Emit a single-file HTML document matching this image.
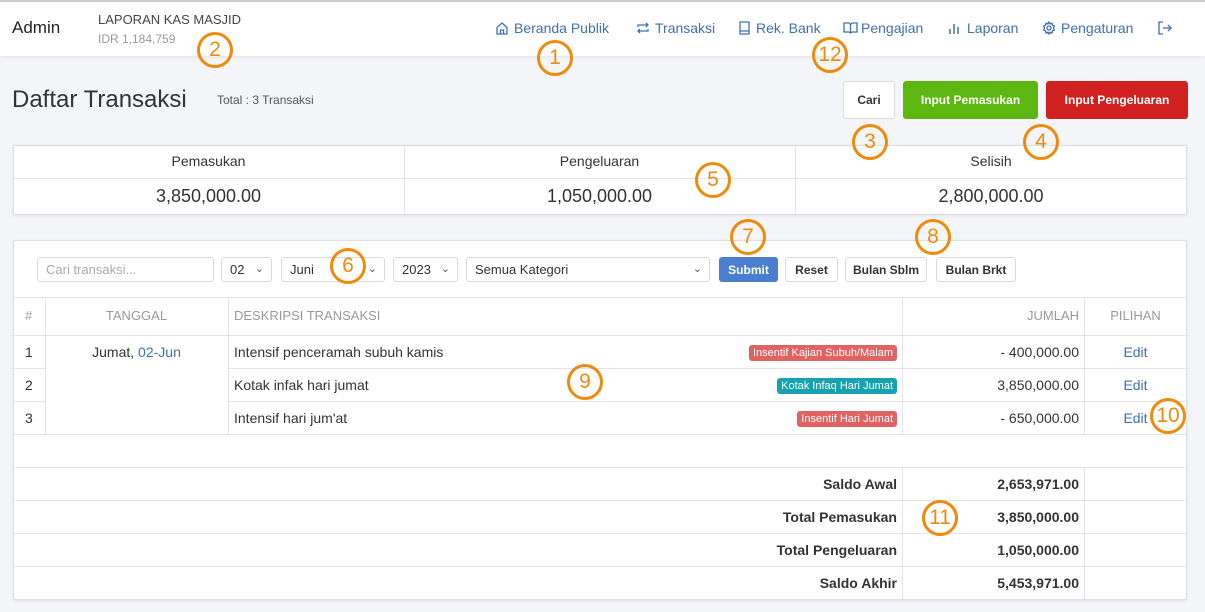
<!DOCTYPE html>
<html><head><meta charset="utf-8"><style>
*{box-sizing:border-box;margin:0;padding:0}
body{width:1205px;height:612px;background:#f3f5f8;font-family:"Liberation Sans",sans-serif;color:#333;position:relative;overflow:hidden;font-size:14px}
.a{position:absolute;white-space:nowrap}
.nav{position:absolute;left:0;top:0;width:1205px;height:56px;background:#fff;border-top:2px solid #ccc;box-shadow:0 1px 4px rgba(0,0,0,.08)}
.nl{position:absolute;top:20px;color:#3e70b3;font-size:14px;white-space:nowrap}
.ic{position:absolute;top:21px}
.btn{position:absolute;border-radius:3px;font-size:12px;font-weight:bold;display:flex;align-items:center;justify-content:center}
.card{position:absolute;background:#fff;border:1px solid #dcdee2;box-shadow:0 1px 3px rgba(0,0,0,.08)}
.inp{position:absolute;top:257px;height:25px;border:1px solid #d7d9dd;border-radius:3px;background:#fff;font-size:13px;padding:4px 8px;color:#333}
.sb{position:absolute;top:257px;height:25px;border:1px solid #d7d9dd;border-radius:3px;background:#fff;font-size:12px;font-weight:bold;display:flex;align-items:center;justify-content:center;color:#333}
.car{position:absolute;right:7px;top:4px;font-size:11px;color:#555}
.hl{position:absolute;height:1px;background:#e2e4e7}
.vl{position:absolute;width:1px;background:#e2e4e7}
.c{position:absolute;width:36px;height:36px;border:3px solid #f08a0c;border-radius:50%;color:#f08a0c;font-size:21px;display:flex;align-items:center;justify-content:center;background:transparent}
.badge{position:absolute;font-size:11px;color:#fff;border-radius:3px;padding:1px 4px;right:308px;line-height:14px}
.td{position:absolute;font-size:14px}
</style></head><body>
<div class="nav"></div>
<div class="a" style="left:12px;top:18px;font-size:17px;color:#222">Admin</div>
<div class="a" style="left:98px;top:12px;font-size:13px;color:#444">LAPORAN KAS MASJID</div>
<div class="a" style="left:98px;top:32px;font-size:12px;color:#999">IDR 1,184,759</div>
<svg class="ic" style="left:495px" width="14" height="14" viewBox="0 0 14 14" fill="none" stroke="#3e70b3" stroke-width="1.3"><path d="M2 6.5L7 2l5 4.5V13H2z M5.5 13V9h3v4"/></svg>
<div class="nl" style="left:514px">Beranda Publik</div>
<svg class="ic" style="left:636px" width="14" height="14" viewBox="0 0 14 14" fill="none" stroke="#3e70b3" stroke-width="1.3"><path d="M2 6V4h10M10 2l2 2-2 2M12 8v2H2M4 12l-2-2 2-2"/></svg>
<div class="nl" style="left:655px">Transaksi</div>
<svg class="ic" style="left:738px" width="13" height="14" viewBox="0 0 13 14" fill="none" stroke="#3e70b3" stroke-width="1.3"><path d="M2 1h9v12H2z M2 10h9"/></svg>
<div class="nl" style="left:756px">Rek. Bank</div>
<svg class="ic" style="left:843px" width="15" height="14" viewBox="0 0 15 14" fill="none" stroke="#3e70b3" stroke-width="1.3"><path d="M1 2h5l1.5 1.5L9 2h5v9H9l-1.5 1L6 11H1z M7.5 3.5v8.5"/></svg>
<div class="nl" style="left:861px">Pengajian</div>
<svg class="ic" style="left:948px" width="13" height="14" viewBox="0 0 13 14" fill="none" stroke="#3e70b3" stroke-width="1.5"><path d="M2 8v5M6 3v10M10 6v7"/></svg>
<div class="nl" style="left:967px">Laporan</div>
<svg class="ic" style="left:1042px" width="14" height="14" viewBox="0 0 14 14" fill="none" stroke="#3e70b3" stroke-width="1.3"><circle cx="7" cy="7" r="2"/><path d="M7 1l1 1.7 2-.5.5 2L12.3 5l-.8 2 .8 2-1.8.8-.5 2-2-.5L7 13l-1-1.7-2 .5-.5-2L1.7 9l.8-2-.8-2 1.8-.8.5-2 2 .5z"/></svg>
<div class="nl" style="left:1061px">Pengaturan</div>
<svg class="ic" style="left:1158px" width="14" height="14" viewBox="0 0 14 14" fill="none" stroke="#3e70b3" stroke-width="1.3"><path d="M5 1H1v12h4M5 7h8M10 4l3 3-3 3"/></svg>

<div class="a" style="left:12px;top:86px;font-size:24px;color:#333">Daftar Transaksi</div>
<div class="a" style="left:217px;top:93px;font-size:12px;color:#555">Total : 3 Transaksi</div>
<div class="btn" style="left:843px;top:81px;width:52px;height:38px;background:#fff;border:1px solid #ddd;color:#333">Cari</div>
<div class="btn" style="left:903px;top:81px;width:135px;height:38px;background:#5cb811;color:#fff">Input Pemasukan</div>
<div class="btn" style="left:1046px;top:81px;width:142px;height:38px;background:#d0201f;color:#fff">Input Pengeluaran</div>

<div class="card" style="left:13px;top:145px;width:1174px;height:70px"></div>
<div class="hl" style="left:14px;top:178px;width:1172px"></div>
<div class="vl" style="left:404px;top:146px;height:68px"></div>
<div class="vl" style="left:795px;top:146px;height:68px"></div>
<div class="a" style="left:13px;width:391px;text-align:center;top:153px">Pemasukan</div>
<div class="a" style="left:404px;width:391px;text-align:center;top:153px">Pengeluaran</div>
<div class="a" style="left:795px;width:392px;text-align:center;top:153px">Selisih</div>
<div class="a" style="left:13px;width:391px;text-align:center;top:186px;font-size:18px">3,850,000.00</div>
<div class="a" style="left:404px;width:391px;text-align:center;top:186px;font-size:18px">1,050,000.00</div>
<div class="a" style="left:795px;width:392px;text-align:center;top:186px;font-size:18px">2,800,000.00</div>

<div class="card" style="left:13px;top:240px;width:1174px;height:360px"></div>
<div class="inp" style="left:37px;width:177px;color:#aaa">Cari transaksi...</div>
<div class="inp" style="left:221px;width:51px">02<span class="car">⌄</span></div>
<div class="inp" style="left:281px;width:104px">Juni<span class="car">⌄</span></div>
<div class="inp" style="left:393px;width:65px">2023<span class="car">⌄</span></div>
<div class="inp" style="left:466px;width:244px">Semua Kategori<span class="car">⌄</span></div>
<div class="btn" style="left:719px;top:257px;width:59px;height:25px;background:#4a7fd0;color:#fff">Submit</div>
<div class="sb" style="left:785px;width:53px">Reset</div>
<div class="sb" style="left:845px;width:82px">Bulan Sblm</div>
<div class="sb" style="left:936px;width:80px">Bulan Brkt</div>

<div class="hl" style="left:14px;top:297px;width:1172px"></div>
<div class="hl" style="left:14px;top:335px;width:1172px"></div>
<div class="hl" style="left:14px;top:368px;width:31px"></div>
<div class="hl" style="left:228px;top:368px;width:958px"></div>
<div class="hl" style="left:14px;top:401px;width:31px"></div>
<div class="hl" style="left:228px;top:401px;width:958px"></div>
<div class="hl" style="left:14px;top:434px;width:1172px"></div>
<div class="hl" style="left:14px;top:467px;width:1172px"></div>
<div class="hl" style="left:14px;top:500px;width:1172px"></div>
<div class="hl" style="left:14px;top:533px;width:1172px"></div>
<div class="hl" style="left:14px;top:566px;width:1172px"></div>
<div class="vl" style="left:45px;top:297px;height:137px"></div>
<div class="vl" style="left:228px;top:297px;height:137px"></div>
<div class="vl" style="left:902px;top:297px;height:137px"></div>
<div class="vl" style="left:1084px;top:297px;height:137px"></div>
<div class="vl" style="left:902px;top:467px;height:132px"></div>
<div class="vl" style="left:1084px;top:467px;height:132px"></div>

<div class="a" style="left:25px;top:308px;color:#999;font-size:13px">#</div>
<div class="a" style="left:45px;width:183px;text-align:center;top:308px;color:#999;font-size:13px">TANGGAL</div>
<div class="a" style="left:234px;top:308px;color:#999;font-size:13px">DESKRIPSI TRANSAKSI</div>
<div class="a" style="left:902px;width:177px;text-align:right;top:308px;color:#999;font-size:13px">JUMLAH</div>
<div class="a" style="left:1084px;width:103px;text-align:center;top:308px;color:#999;font-size:13px">PILIHAN</div>

<div class="td" style="left:25px;top:344px">1</div>
<div class="td" style="left:25px;top:377px">2</div>
<div class="td" style="left:25px;top:410px">3</div>
<div class="td" style="left:45px;width:183px;text-align:center;top:344px">Jumat, <span style="color:#3e70b3">02-Jun</span></div>
<div class="td" style="left:234px;top:344px">Intensif penceramah subuh kamis</div>
<div class="td" style="left:234px;top:377px">Kotak infak hari jumat</div>
<div class="td" style="left:234px;top:410px">Intensif hari jum'at</div>
<div class="badge" style="top:345px;background:#e06262">Insentif Kajian Subuh/Malam</div>
<div class="badge" style="top:378px;background:#17a2b0">Kotak Infaq Hari Jumat</div>
<div class="badge" style="top:411px;background:#e06262">Insentif Hari Jumat</div>
<div class="td" style="left:902px;width:177px;text-align:right;top:344px">- 400,000.00</div>
<div class="td" style="left:902px;width:177px;text-align:right;top:377px">3,850,000.00</div>
<div class="td" style="left:902px;width:177px;text-align:right;top:410px">- 650,000.00</div>
<div class="td" style="left:1084px;width:103px;text-align:center;top:344px;color:#3e70b3">Edit</div>
<div class="td" style="left:1084px;width:103px;text-align:center;top:377px;color:#3e70b3">Edit</div>
<div class="td" style="left:1084px;width:103px;text-align:center;top:410px;color:#3e70b3">Edit</div>

<div class="td" style="left:14px;width:883px;text-align:right;top:476px;font-weight:bold">Saldo Awal</div>
<div class="td" style="left:14px;width:883px;text-align:right;top:509px;font-weight:bold">Total Pemasukan</div>
<div class="td" style="left:14px;width:883px;text-align:right;top:542px;font-weight:bold">Total Pengeluaran</div>
<div class="td" style="left:14px;width:883px;text-align:right;top:575px;font-weight:bold">Saldo Akhir</div>
<div class="td" style="left:902px;width:177px;text-align:right;top:476px;font-weight:bold">2,653,971.00</div>
<div class="td" style="left:902px;width:177px;text-align:right;top:509px;font-weight:bold">3,850,000.00</div>
<div class="td" style="left:902px;width:177px;text-align:right;top:542px;font-weight:bold">1,050,000.00</div>
<div class="td" style="left:902px;width:177px;text-align:right;top:575px;font-weight:bold">5,453,971.00</div>

<div class="c" style="left:537px;top:40px">1</div>
<div class="c" style="left:197px;top:32px">2</div>
<div class="c" style="left:852px;top:124px">3</div>
<div class="c" style="left:1023px;top:124px">4</div>
<div class="c" style="left:695px;top:162px">5</div>
<div class="c" style="left:330px;top:248px">6</div>
<div class="c" style="left:730px;top:219px">7</div>
<div class="c" style="left:915px;top:219px">8</div>
<div class="c" style="left:567px;top:364px">9</div>
<div class="c" style="left:1150px;top:398px">10</div>
<div class="c" style="left:922px;top:500px">11</div>
<div class="c" style="left:812px;top:37px">12</div>
</body></html>
